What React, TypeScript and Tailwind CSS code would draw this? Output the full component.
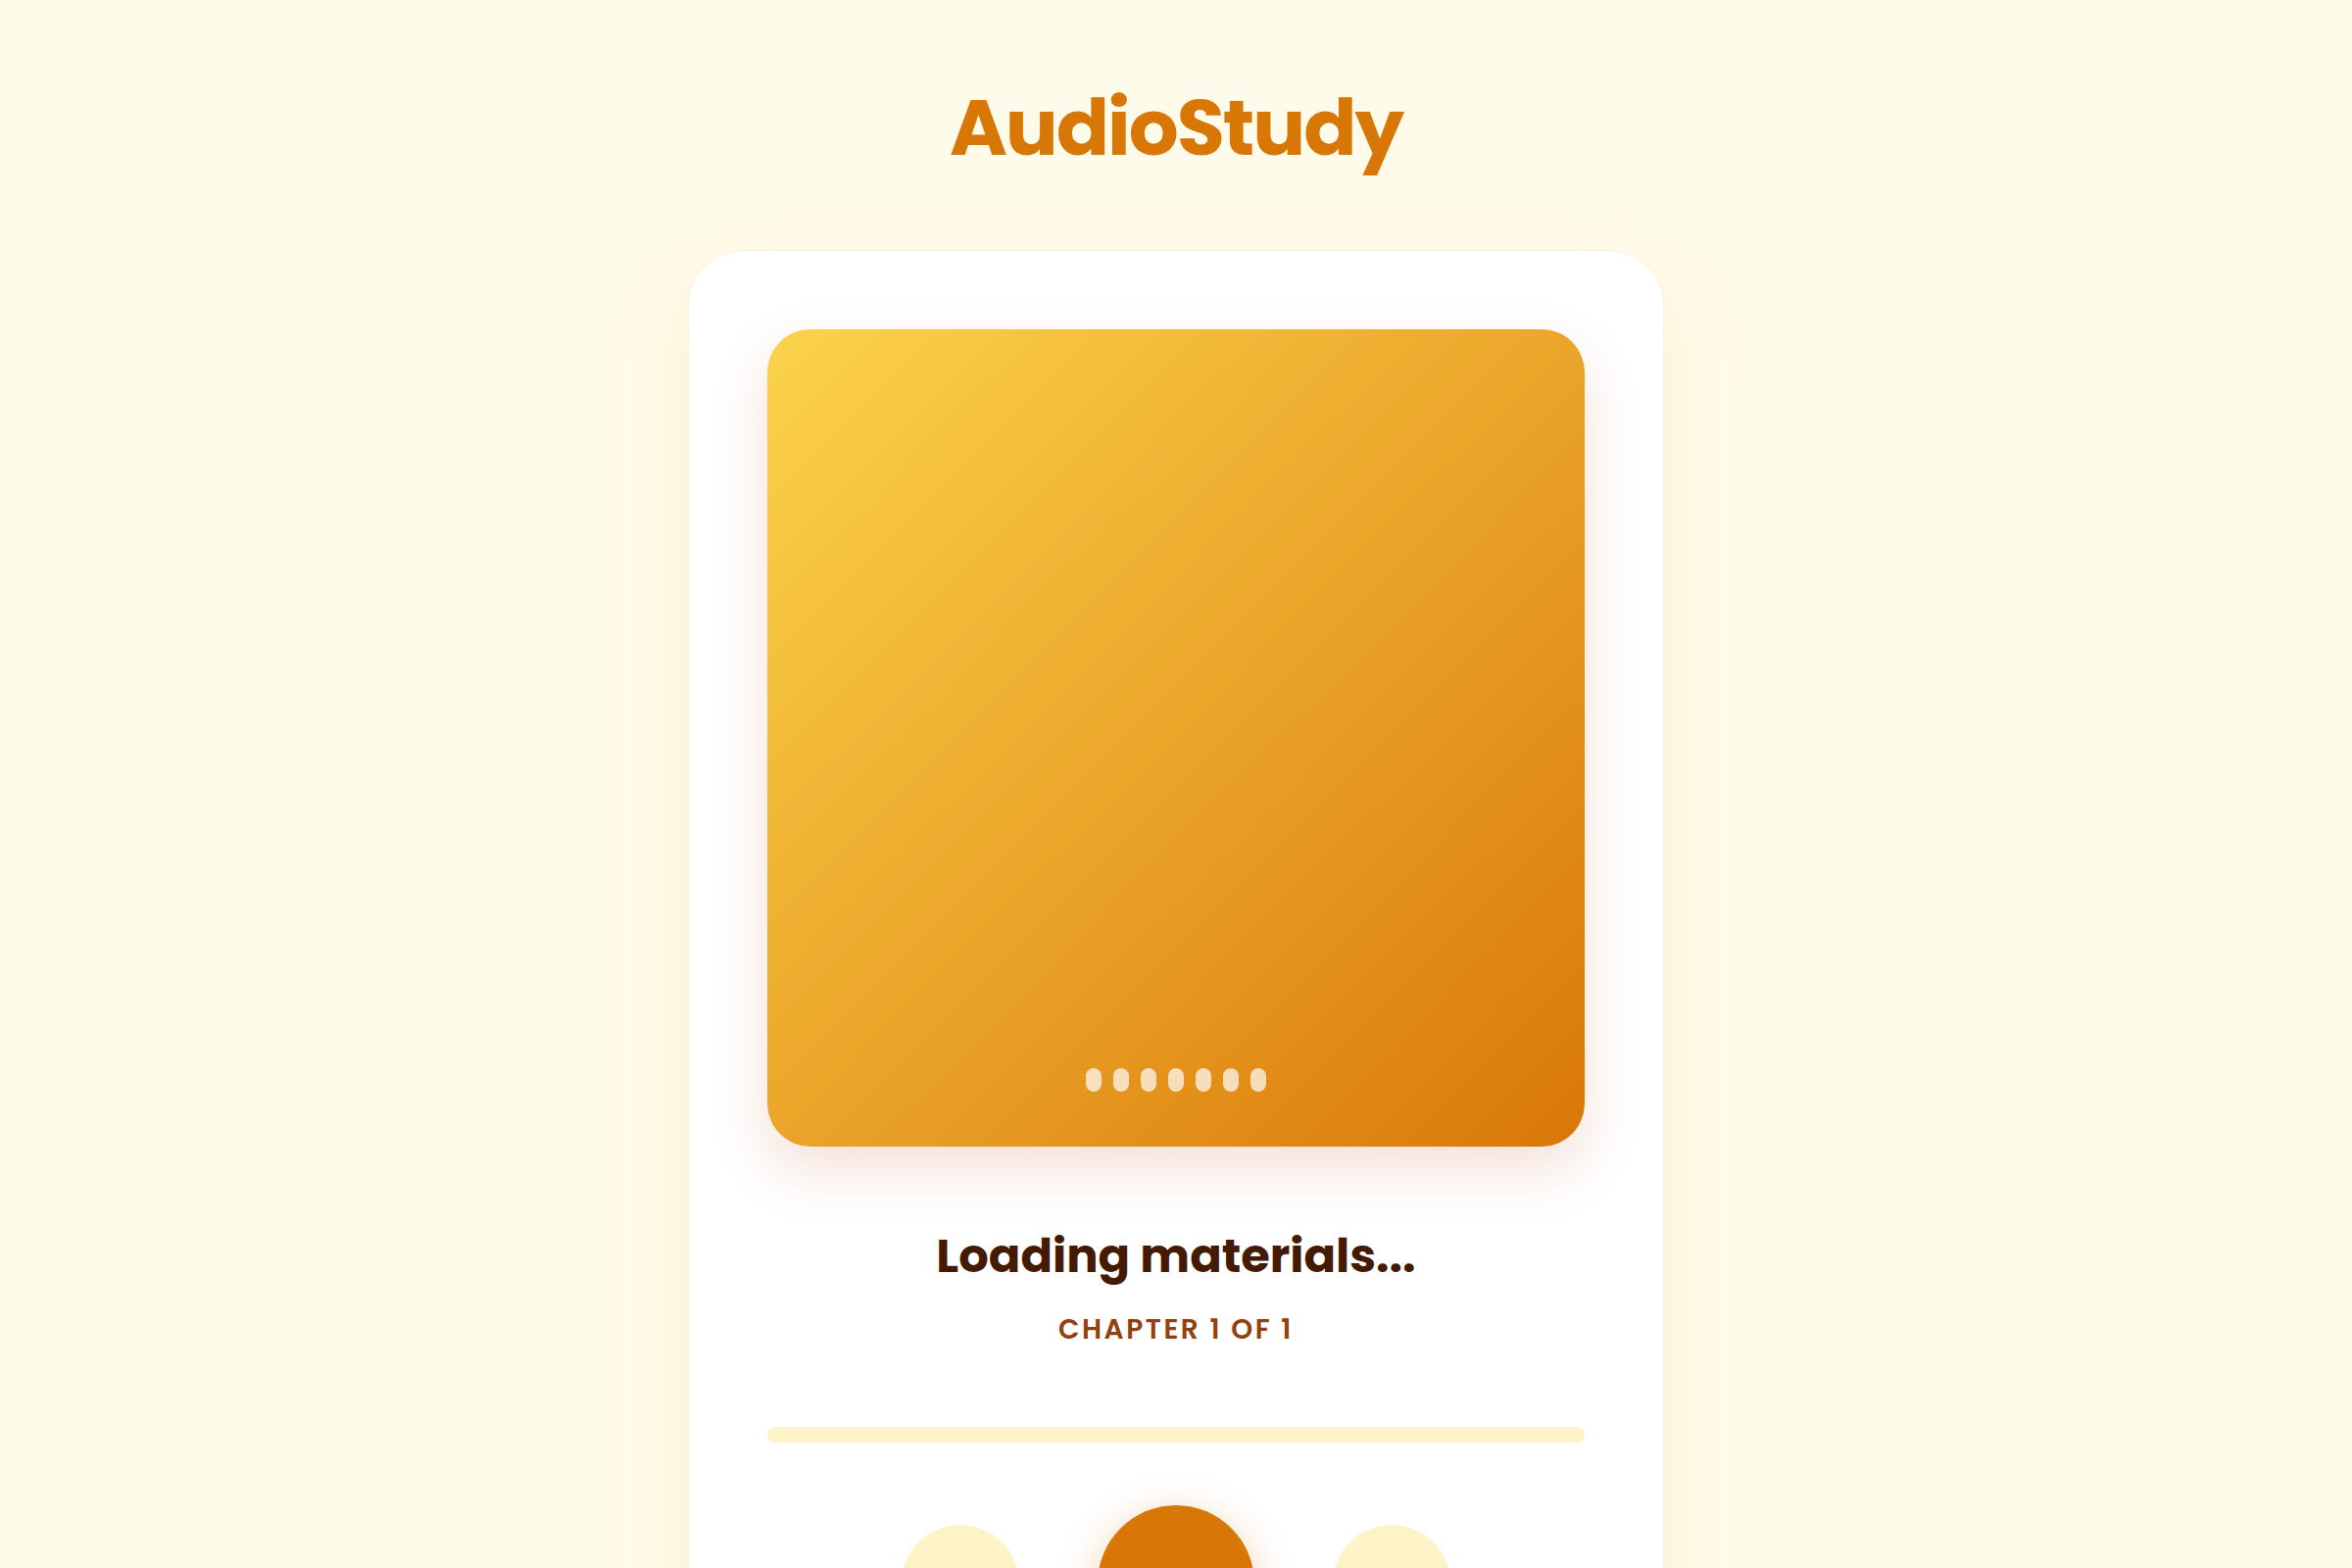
import { Play, SkipBack, SkipForward } from "lucide-react";

const font = { fontFamily: "Poppins, Inter, 'Noto Sans', sans-serif" };

export default function App() {
  const bars = [0, 1, 2, 3, 4, 5, 6];

  return (
    <main
      className="min-h-screen bg-[#fffbeb] flex flex-col items-center pt-[90px] pb-24"
      style={font}
    >
      {/* Header */}
      <h1 className="text-[80px] leading-none font-bold tracking-tight text-[#d97706]">
        AudioStudy
      </h1>

      {/* Player card */}
      <section className="mt-[85px] w-[996px] rounded-[3.5rem] bg-white border border-[#fdf0e0] p-20 shadow-[0_30px_90px_rgba(245,158,11,0.12)]">
        {/* Cover */}
        <div className="aspect-square w-full rounded-[2.75rem] bg-[linear-gradient(to_bottom_right,#fcd34d,#d97706)] flex items-end justify-center pb-[56px] shadow-[0_24px_60px_rgba(194,65,12,0.16)]">
          <div className="flex items-end gap-3">
            {bars.map((b) => (
              <span key={b} className="w-4 h-6 rounded-full bg-white/70" />
            ))}
          </div>
        </div>

        {/* Track info */}
        <div className="mt-[82px] flex flex-col items-center">
          <h2 className="text-[48px] leading-tight font-bold text-[#451a03]">
            Loading materials...
          </h2>
          <p className="mt-[24px] text-[28px] font-semibold tracking-[0.09em] uppercase text-[#92400e]">
            Chapter 1 of 1
          </p>
        </div>

        {/* Progress */}
        <div className="mt-[78px] h-4 w-full rounded-full bg-[#fef3c7]" />

        {/* Controls */}
        <div className="mt-16 flex items-center justify-center gap-20">
          <button className="w-[120px] h-[120px] rounded-full bg-[#fef3c7] flex items-center justify-center text-[#b45309]">
            <SkipBack size={36} />
          </button>
          <button className="w-40 h-40 rounded-full bg-[#d97706] flex items-center justify-center text-white shadow-[0_10px_40px_rgba(217,119,6,0.35)]">
            <Play size={36} fill="currentColor" />
          </button>
          <button className="w-[120px] h-[120px] rounded-full bg-[#fef3c7] flex items-center justify-center text-[#b45309]">
            <SkipForward size={36} />
          </button>
        </div>
      </section>
    </main>
  );
}
